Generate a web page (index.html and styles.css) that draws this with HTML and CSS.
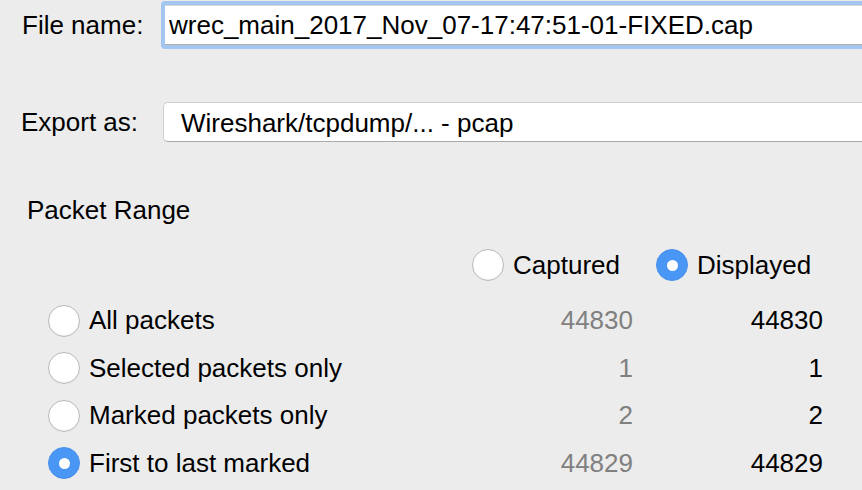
FILE: index.html
```html
<!DOCTYPE html>
<html lang="en">
    <head>
        <title>Export Specified Packets</title>
        <meta charset="UTF-8">
        <link rel="stylesheet" href="styles.css">
    </head>
    <body>
        <div class="dialog">
            <div class="field-row name-row">
                <div class="field-label">File name:</div>
                <div class="focus-ring">
                    <div class="text-input">wrec_main_2017_Nov_07-17:47:51-01-FIXED.cap</div>
                </div>
            </div>
            <div class="field-row export-row">
                <div class="field-label">Export as:</div>
                <div class="popup">Wireshark/tcpdump/... - pcap</div>
            </div>

            <div class="group-title">Packet Range</div>

            <div class="range">
                <div class="range-head">
                    <div class="choice captured"><span class="radio"></span>Captured</div>
                    <div class="choice"><span class="radio on"></span>Displayed</div>
                </div>
                <div class="range-row">
                    <div class="choice"><span class="radio"></span>All packets</div>
                    <div class="count dim">44830</div>
                    <div class="count">44830</div>
                </div>
                <div class="range-row">
                    <div class="choice"><span class="radio"></span>Selected packets only</div>
                    <div class="count dim">1</div>
                    <div class="count">1</div>
                </div>
                <div class="range-row">
                    <div class="choice"><span class="radio"></span>Marked packets only</div>
                    <div class="count dim">2</div>
                    <div class="count">2</div>
                </div>
                <div class="range-row">
                    <div class="choice"><span class="radio on"></span>First to last marked</div>
                    <div class="count dim">44829</div>
                    <div class="count">44829</div>
                </div>
            </div>
        </div>
    </body>
</html>
```

FILE: styles.css
```css
body {
    background-color: #ECECEC;
    margin: 0;
    font-size: 26px;
    font-family: 'Liberation Sans', Arial, sans-serif;
    color: #000000;
    overflow: hidden;
}

.dialog {
    width: 862px;
    height: 490px;
}

.field-row {
    display: flex;
    align-items: center;
}

.field-label {
    flex: none;
}

.name-row {
    margin-top: 1px;
    height: 48px;
    padding-left: 22px;
}
.name-row .field-label {
    width: 139px;
}

.focus-ring {
    flex: 1;
    height: 48px;
    box-sizing: border-box;
    padding: 4px 0 4px 4px;
    background-color: #A3C6F1;
    border-radius: 4px 0 0 4px;
}

.text-input {
    height: 40px;
    box-sizing: border-box;
    padding-left: 4px;
    line-height: 39px;
    background-color: #FFFFFF;
    border-bottom: 1px solid #B0B0B0;
    border-top: 1px solid #D4D4D4;
    white-space: nowrap;
}

.export-row {
    margin-top: 53px;
    height: 40px;
    padding-left: 21px;
}
.export-row .field-label {
    width: 142px;
}

.popup {
    flex: 1;
    height: 40px;
    box-sizing: border-box;
    padding-left: 17px;
    line-height: 40px;
    background-color: #FFFFFF;
    border: 1px solid #CFCFCF;
    border-bottom-color: #A9A9A9;
    border-right: none;
    border-radius: 5px 0 0 5px;
    white-space: nowrap;
}

.group-title {
    margin-top: 53px;
    padding-left: 27px;
    height: 30px;
    line-height: 30px;
}

.range {
    margin: 0 0 0 48px;
    width: 775px;
}

.range-head {
    margin-top: 16px;
    height: 48px;
    display: flex;
    align-items: center;
    padding-left: 424px;
}
.range-head .captured {
    width: 184px;
}

.range-row {
    display: flex;
    align-items: center;
    height: 47.5px;
}
.range-head + .range-row {
    margin-top: 8px;
}
.range-row .choice {
    flex: 1;
}

.choice {
    display: flex;
    align-items: center;
    white-space: nowrap;
}

.radio {
    flex: none;
    width: 32px;
    height: 32px;
    box-sizing: border-box;
    margin-right: 9px;
    border-radius: 50%;
    background-color: #FFFFFF;
    border: 1px solid #B9B9B9;
    box-shadow: inset 0 -1px 1px rgba(0, 0, 0, 0.06);
    display: flex;
    align-items: center;
    justify-content: center;
}
.radio.on {
    background-color: #4A96F4;
    border-color: #4A90EE;
    box-shadow: none;
}
.radio.on:after {
    content: '';
    width: 11px;
    height: 11px;
    border-radius: 50%;
    background-color: #FFFFFF;
}

.count {
    flex: none;
    width: 190px;
    text-align: right;
}
.count.dim {
    color: #808080;
    width: 160px;
}
```
